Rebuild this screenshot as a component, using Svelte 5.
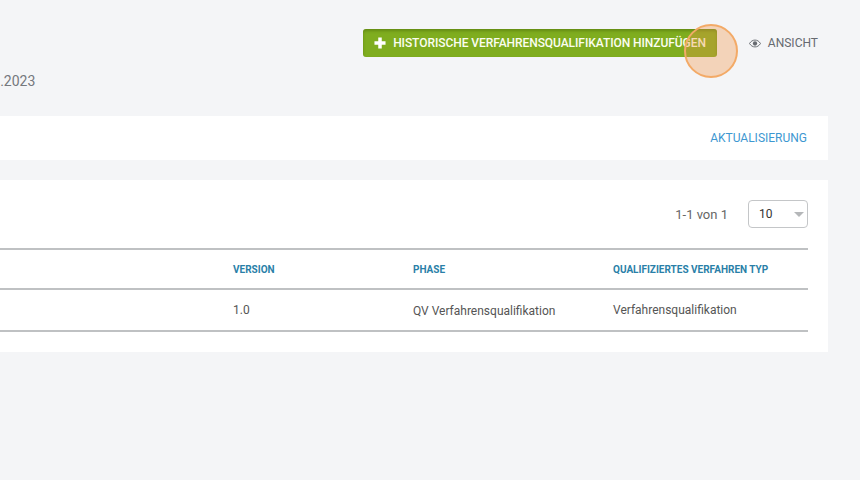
<script>
	const columns = ['', 'Version', 'Phase', 'Qualifiziertes Verfahren Typ'];
	const row = { version: '1.0', phase: 'QV Verfahrensqualifikation', type: 'Verfahrensqualifikation' };
</script>

<div class="page">
	<header class="top">
		<button class="add">
			<svg width="12" height="12" viewBox="0 0 13 13" aria-hidden="true">
				<path d="M4.6 0.5h3.8v4.1h4.1v3.8H8.4v4.1H4.6V8.4H0.5V4.6h4.1z" fill="#fff" />
			</svg>
			Historische Verfahrensqualifikation hinzufügen
		</button>
		<span class="view">
			<svg width="12" height="9" viewBox="0 0 14 10" aria-hidden="true">
				<path d="M0.6 5C2.2 2.4 4.4 1 7 1s4.800 1.400 6.400 4C11.800 7.600 9.600 9 7 9S2.200 7.600 0.600 5z" fill="none" stroke="#666a70" stroke-width="1.100" />
				<circle cx="7" cy="5" r="2.500" fill="#666a70" />
			</svg>
			Ansicht
		</span>
	</header>

	<p class="date">01.01.2023</p>

	<section class="card bar">
		<a href="#top">Aktualisierung</a>
	</section>

	<section class="card list">
		<div class="pager">
			<span>1-1 von 1</span>
			<div class="select">10<i></i></div>
		</div>
		<div class="grid head">
			{#each columns as col}
				<div>{col}</div>
			{/each}
		</div>
		<div class="grid body">
			<div></div>
			<div class="up">{row.version}</div>
			<div>{row.phase}</div>
			<div class="up">{row.type}</div>
		</div>
	</section>

	<div class="click"></div>
</div>

<style>
	:global(body) {
		margin: 0;
		background: #f4f5f7;
		overflow: hidden;
	}

	.page {
		position: relative;
		width: 860px;
		height: 480px;
		padding: 29px 32px 0 0;
		box-sizing: border-box;
		overflow: hidden;
		font-family: Roboto, "Liberation Sans", sans-serif;
		color: #555;
	}

	.top {
		display: flex;
		justify-content: flex-end;
		align-items: center;
		height: 28px;
		gap: 32px;
		padding-right: 10px;
	}

	.add {
		display: flex;
		align-items: center;
		gap: 7px;
		height: 28px;
		padding: 0 11px;
		border: 0;
		border-radius: 3px;
		background: #7fad1f;
		box-shadow: inset 0 2px 3px rgba(60, 90, 0, 0.4);
		color: #fbfdf0;
		font: 500 12px Roboto, sans-serif;
		letter-spacing: -0.065px;
		text-transform: uppercase;
		white-space: nowrap;
	}

	.view {
		display: flex;
		align-items: center;
		gap: 7px;
		font-size: 12px;
		color: #666a70;
		text-transform: uppercase;
	}

	.date {
		margin: 16px 0 0 -35px;
		font-size: 14px;
		line-height: 17px;
		color: #75787d;
	}

	.card {
		background: #fff;
	}

	.bar {
		display: flex;
		justify-content: flex-end;
		align-items: center;
		height: 44px;
		margin-top: 26px;
		padding-right: 21px;
	}

	.bar a {
		color: #3d97d1;
		font-size: 12px;
		text-decoration: none;
		text-transform: uppercase;
	}

	.list {
		height: 172px;
		margin-top: 20px;
		padding: 20px 20px 0 0;
		box-sizing: border-box;
	}

	.pager {
		display: flex;
		justify-content: flex-end;
		align-items: center;
		gap: 20px;
		height: 28px;
		font-size: 13px;
		color: #666;
	}

	.select {
		position: relative;
		width: 60px;
		height: 28px;
		box-sizing: border-box;
		padding-left: 10px;
		border: 1px solid #c4c6c8;
		border-radius: 4px;
		line-height: 27px;
		font-size: 12px;
		color: #333;
	}

	.select i {
		position: absolute;
		right: 3.500px;
		top: 11px;
		border-style: solid;
		border-width: 5px 5.500px 0;
		border-color: #b5b7b9 transparent transparent;
	}

	.grid {
		display: grid;
		grid-template-columns: 233px 180px 200px 195px;
		align-items: center;
		border-bottom: 2px solid #bfc1c3;
	}

	.head {
		height: 38px;
		margin-top: 20px;
		border-top: 2px solid #bfc1c3;
		color: #2a7fa8;
		font-size: 10px;
		font-weight: 700;
		text-transform: uppercase;
	}

	.body {
		height: 39px;
		padding-top: 1px;
		font-size: 12px;
		color: #555;
	}

	.up {
		position: relative;
		top: -1px;
	}

	.click {
		position: absolute;
		left: 684px;
		top: 24px;
		width: 54px;
		height: 54px;
		box-sizing: border-box;
		border: 2px solid #f3aa67;
		border-radius: 50%;
		background: rgba(240, 150, 70, 0.35);
	}
</style>
